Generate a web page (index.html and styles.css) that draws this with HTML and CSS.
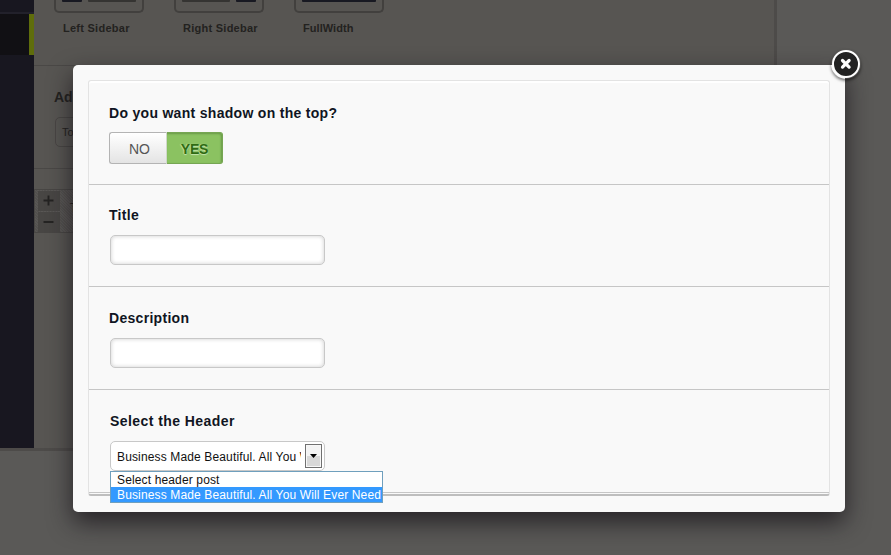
FILE: index.html
```
<!DOCTYPE html>
<html lang="en">
<head>
<meta charset="utf-8">
<title>Page options</title>
<link rel="stylesheet" href="styles.css">
</head>
<body>
<div class="page">
  <aside class="sidebar">
    <div class="nav-item"></div>
    <div class="nav-item active"></div>
  </aside>
  <main class="content">
    <section class="layouts">
      <figure class="layout">
        <div class="thumb"><i class="block dark side"></i><i class="block wide"></i></div>
        <figcaption>Left Sidebar</figcaption>
      </figure>
      <figure class="layout">
        <div class="thumb"><i class="block wide"></i><i class="block dark side"></i></div>
        <figcaption>Right Sidebar</figcaption>
      </figure>
      <figure class="layout full">
        <div class="thumb"><i class="block dark wide"></i></div>
        <figcaption>FullWidth</figcaption>
      </figure>
    </section>
    <section class="add">
      <h3>Add</h3>
      <div class="add-select">Top</div>
    </section>
    <section class="item-row">
      <div class="steps">
        <svg class="step" viewBox="0 0 22 20"><path d="M5.5 9.5h10M10.5 4.5v10"/></svg>
        <svg class="step" viewBox="0 0 22 20"><path d="M5.5 10h10"/></svg>
      </div>
      <div class="item-name">Top</div>
    </section>
  </main>
</div>

<div class="modal">
  <div class="panel">
    <section class="field">
      <h4>Do you want shadow on the top?</h4>
      <div class="toggle"><span class="no">NO</span><span class="yes">YES</span></div>
    </section>
    <section class="field">
      <h4>Title</h4>
      <input class="text" type="text" aria-label="Title">
    </section>
    <section class="field">
      <h4>Description</h4>
      <input class="text" type="text" aria-label="Description">
    </section>
    <section class="field header-field">
      <h4>Select the Header</h4>
      <div class="select">
        <span class="value">Business Made Beautiful. All You Will</span>
        <span class="arrow"><svg viewBox="0 0 7 4"><path d="M0 0h7L3.5 4z"/></svg></span>
        <div class="menu">
          <div class="option">Select header post</div>
          <div class="option selected">Business Made Beautiful. All You Will Ever Need</div>
        </div>
      </div>
    </section>
  </div>
  <div class="close">
    <svg viewBox="0 0 30 30"><circle cx="15" cy="15" r="13" fill="#222" stroke="#fff" stroke-width="2"/><path d="M11.5 11.5l6.6 6.6M18.1 11.5l-6.6 6.6" stroke="#fff" stroke-width="3.2" stroke-linecap="round"/></svg>
  </div>
</div>
</body>
</html>
```
FILE: styles.css
```
* { box-sizing: border-box; }
body {
  margin: 0;
  width: 891px;
  height: 555px;
  overflow: hidden;
  position: relative;
  background: #5a5957;
  font-family: "Liberation Sans", Arial, sans-serif;
}
.page {
  display: flex;
  width: 777px;
  height: 451px;
  border-right: 3px solid #4d4b49;
  border-bottom: 3px solid #4d4b49;
}
.sidebar { width: 34px; flex: none; background: #181720; }
.nav-item { height: 13px; border-bottom: 1px solid #22212b; }
.nav-item.active {
  height: 42px;
  border-top: 1px solid #22212b;
  border-bottom: 0;
  background: linear-gradient(#5f6d0b, #5f6d0b) right / 5px 100% no-repeat #111014;
}
.content { flex: 1; background: #575552; color: #232220; }
.layouts {
  display: flex;
  gap: 30px;
  height: 66px;
  padding-left: 20px;
  border-bottom: 1px solid #4a4846;
}
.layout { margin: 0; width: 90px; }
.thumb {
  display: flex;
  gap: 6px;
  height: 13px;
  padding: 0 6px 9px;
  border: 2px solid #42403e;
  border-top: 0;
  border-radius: 0 0 5px 5px;
}
.block { height: 2px; background: #353432; border-radius: 0 0 1px 1px; }
.block.wide { flex: 1; }
.block.side { width: 20px; }
.block.dark { background: #181922; }
figcaption {
  margin: 9px 0 0 9px;
  font: bold 11px/13px "Liberation Sans", Arial, sans-serif;
  letter-spacing: .26px;
  white-space: nowrap;
}
.full figcaption { letter-spacing: .05px; }
.add { height: 103px; padding: 23px 0 0 20px; border-bottom: 1px solid #4a4846; }
.add h3 { margin: 0; font-size: 14px; line-height: 17px; }
.add-select {
  width: 215px;
  height: 30px;
  margin: 11px 0 0 1px;
  padding-left: 6px;
  border: 1px solid #484644;
  border-radius: 5px;
  font-size: 11px;
  line-height: 29px;
}
.item-row {
  display: flex;
  height: 44px;
  margin-top: 20px;
  padding: 1px 0 0 3px;
  border: 1px solid #484644;
  background: repeating-linear-gradient(45deg, #52504e 0 1px, #595755 1px 2px);
}
.steps { display: flex; flex-direction: column; gap: 1px; }
.step { width: 22px; height: 20px; background: #484644; }
.step path { stroke: #242322; stroke-width: 1.9; }
.item-name { margin: 10px 0 0 10px; font-size: 12px; }

.modal {
  position: absolute;
  left: 73px;
  top: 65px;
  width: 772px;
  height: 447px;
  padding: 15px;
  border-radius: 5px;
  background: #f9f9f9;
  box-shadow: 0 10px 25px rgba(20, 16, 22, .75);
}
.panel {
  width: 742px;
  height: 416px;
  border: 1px solid #e3e3e3;
  border-bottom: 2px solid #bebebe;
  border-radius: 3px;
  box-shadow: inset 0 2px 0 #fff;
}
.field {
  height: 103px;
  padding: 25px 0 0 20px;
  border-bottom: 1px solid #c6c6c6;
}
.field:first-child { height: 104px; padding-top: 24px; }
.field:nth-child(2) { height: 102px; padding-top: 22px; }
.field:nth-child(n+3) { padding-top: 23px; }
h4 {
  margin: 0;
  color: #101522;
  font-size: 14px;
  line-height: 17px;
  letter-spacing: .3px;
}
.header-field h4 { padding-left: 1px; letter-spacing: .43px; }
.text, .select {
  display: block;
  width: 215px;
  height: 30px;
  margin: 11px 0 0 1px;
  border: 1px solid #c8c8c8;
  border-radius: 5px;
  background: #fff;
}
.text { box-shadow: inset 0 0 4px rgba(0, 0, 0, .2); }
.toggle {
  display: flex;
  width: 114px;
  height: 32px;
  margin-top: 10px;
  font-size: 14px;
  text-align: center;
}
.no {
  width: 58px;
  padding-left: 3px;
  border: 1px solid #b4b4b4;
  border-right-color: #d0d8ca;
  border-radius: 3px 0 0 3px;
  background: linear-gradient(#fff, #e4e4e4);
  color: #555;
  line-height: 32px;
}
.yes {
  width: 56px;
  border: 1px solid #76a653;
  border-left: 0;
  border-radius: 0 3px 3px 0;
  background: #8bc261;
  box-shadow: inset -1px 1px 2px #6a9a48;
  color: #2f6b12;
  font-weight: bold;
  line-height: 32px;
  letter-spacing: -.2px;
  text-shadow: 0 1px 1px #c5e6ae, -1px 0 1px #b7dca0;
}
.select {
  position: relative;
  display: flex;
  justify-content: space-between;
  padding: 2px 2px 2px 6px;
  color: #111;
  font-size: 12px;
}
.value {
  width: 184px;
  overflow: hidden;
  white-space: nowrap;
  line-height: 26px;
  letter-spacing: .14px;
}
.arrow {
  display: flex;
  align-items: center;
  justify-content: center;
  width: 17px;
  height: 24px;
  border: 1px solid #707070;
  background: linear-gradient(#f3f3f3 50%, #d8d8d8 50%);
  box-shadow: inset 0 0 0 1px #f7f7f7;
}
.arrow svg { width: 7px; height: 4px; flex: none; }
.menu {
  position: absolute;
  z-index: 2;
  left: -1px;
  top: 29px;
  width: 273px;
  height: 32px;
  border: 1px solid #6f9fbd;
  background: #fff;
}
.option {
  height: 15px;
  padding-left: 6px;
  white-space: nowrap;
  line-height: 16px;
  letter-spacing: .14px;
}
.option.selected { background: #3399ff; color: #fff; }
.close {
  position: absolute;
  left: 758px;
  top: -16px;
  width: 30px;
  height: 30px;
  border-radius: 50%;
  box-shadow: 0 2px 3px rgba(0, 0, 0, .5);
}
.close svg { display: block; width: 30px; height: 30px; }
```
